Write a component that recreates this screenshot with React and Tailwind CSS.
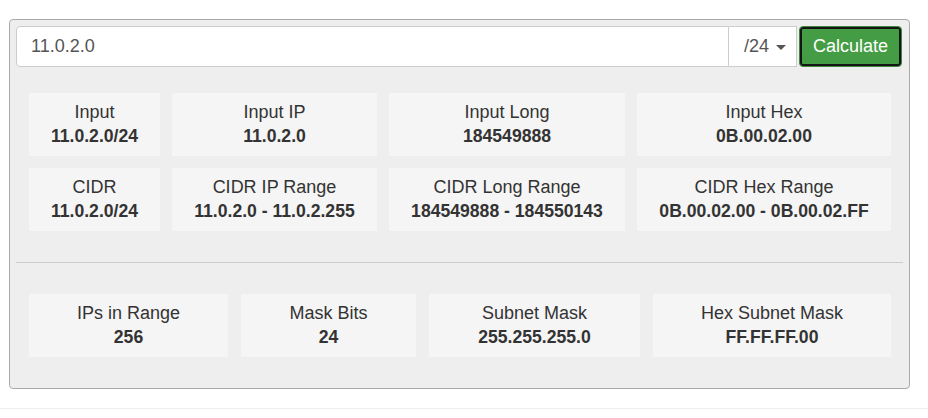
import React from "react";

const row1 = [
  ["Input", "11.0.2.0/24"],
  ["Input IP", "11.0.2.0"],
  ["Input Long", "184549888"],
  ["Input Hex", "0B.00.02.00"],
];
const row2 = [
  ["CIDR", "11.0.2.0/24"],
  ["CIDR IP Range", "11.0.2.0 - 11.0.2.255"],
  ["CIDR Long Range", "184549888 - 184550143"],
  ["CIDR Hex Range", "0B.00.02.00 - 0B.00.02.FF"],
];
const row3 = [
  ["IPs in Range", "256"],
  ["Mask Bits", "24"],
  ["Subnet Mask", "255.255.255.0"],
  ["Hex Subnet Mask", "FF.FF.FF.00"],
];

function Cell({ label, value }) {
  return (
    <div className="bg-[#f5f5f5] h-[63px] pt-[7px] pb-[8px] text-center text-[18px] leading-[24px] text-[#333] whitespace-nowrap">
      <div>{label}</div>
      <div className="font-bold text-[17.6px]">{value}</div>
    </div>
  );
}

export default function App() {
  return (
    <div
      className="w-[928px] h-[418px] bg-white overflow-hidden"
      style={{ fontFamily: '"Liberation Sans", Arial, sans-serif' }}
    >
      <div className="ml-[9px] mt-[19px] w-[901px] border border-[#aaaaaa] rounded-[4px] bg-[#eeeeee] px-[6px] pt-[6px] pb-[31px]">
        <div className="flex h-[41px]">
          <div className="w-[713px] flex items-center bg-white border border-[#cccccc] rounded-l-[4px] pl-[14px] text-[18px] text-[#555]">
            11.0.2.0
          </div>
          <div className="w-[68px] flex items-center bg-white border-y border-r border-[#cccccc] pl-[15px] text-[18px] text-[#555]">
            /24
            <span className="ml-[7px] mt-[1px] inline-block w-0 h-0 border-t-[5px] border-t-[#555] border-x-[5px] border-x-transparent"></span>
          </div>
          <button className="ml-[2px] w-[103px] h-[41px] rounded-[4px] border border-[#3b8a3e] shadow-[inset_0_0_0_2px_#151515] bg-[#449d44] text-white text-[18px] flex items-center justify-center pb-[1px]">
            Calculate
          </button>
        </div>

        <div className="mt-[26px] ml-[13px] grid grid-cols-[131px_205px_236px_254px] gap-x-[12px] gap-y-[12px]">
          {row1.map(([l, v]) => (
            <Cell key={l} label={l} value={v} />
          ))}
          {row2.map(([l, v]) => (
            <Cell key={l} label={l} value={v} />
          ))}
        </div>

        <div className="mt-[31px] h-px bg-[#cccccc]"></div>

        <div className="mt-[31px] ml-[13px] grid grid-cols-[199px_175px_211px_238px] gap-x-[13px]">
          {row3.map(([l, v]) => (
            <Cell key={l} label={l} value={v} />
          ))}
        </div>
      </div>
      <div className="mt-[19px] h-px bg-[#eeeeee]"></div>
    </div>
  );
}
